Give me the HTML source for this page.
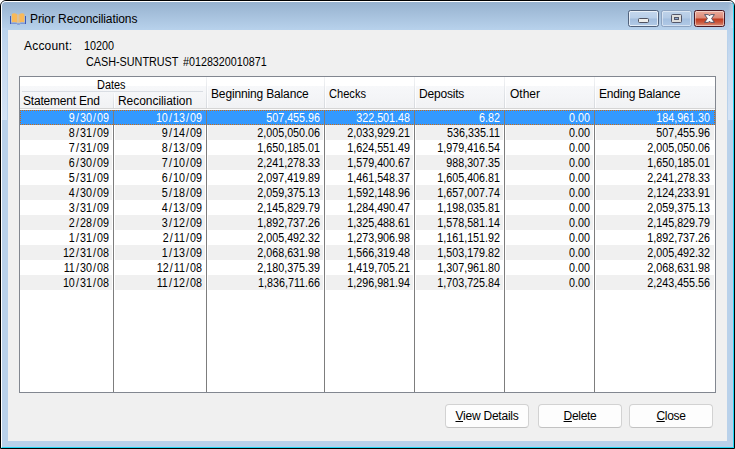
<!DOCTYPE html><html><head><meta charset="utf-8"><title>Prior Reconciliations</title><style>
html,body{margin:0;padding:0;}
body{width:735px;height:449px;overflow:hidden;background:#fff;font-family:"Liberation Sans",sans-serif;font-size:12px;color:#000;position:relative;}
.abs{position:absolute;}
#win{position:absolute;left:0;top:0;width:733px;height:447px;border:1px solid #000;border-radius:6px 6px 0 0;background:#b9d1ea;overflow:hidden;}
#glass{position:absolute;left:0;top:0;width:733px;height:40px;background:linear-gradient(#98b3d0 0,#98b3d0 2px,#b9d3ed 30px);}
#hl{position:absolute;left:0;top:0;width:731px;height:445px;border-left:1px solid #fff;border-top:1px solid #fff;border-right:1px solid #22d6f4;border-bottom:1px solid #22d6f4;border-radius:5px 5px 0 0;}
.stripe{position:absolute;top:27px;width:5px;height:92px;background:linear-gradient(#b9d2ec 0,#c6d9ef 30px,#d4e3f5 100%);}
#client{position:absolute;left:8px;top:30px;width:719px;height:411px;background:#f0f0f0;}
.t{position:absolute;white-space:nowrap;line-height:14px;height:14px;}
#title{left:30px;top:12px;letter-spacing:-0.1px;}
#tbl{position:absolute;left:19px;top:76px;width:695px;height:315px;border:1px solid #828790;background:#fff;}
.hd{position:absolute;white-space:nowrap;line-height:14px;}
.row{position:absolute;left:20px;width:695px;height:15px;}
.g{position:absolute;top:0;height:15px;background:#f0f0f0;}
.c{position:absolute;top:1px;height:15px;line-height:15px;text-align:right;white-space:nowrap;transform:scaleX(0.895);transform-origin:100% 50%;}
.c i{font-style:normal;margin:0 1.2px;}
.vl{position:absolute;top:110px;width:1px;height:282px;background:#7d7d7d;}
.hs{position:absolute;width:1px;background:linear-gradient(#f2f3f5,#dfe2e6 60%,#d8dbe0);}
.btn{position:absolute;top:404px;width:82px;height:22px;border:1px solid #d2d2d2;border-bottom-color:#c2c2c2;border-radius:4px;background:#fdfdfd;text-align:center;line-height:22px;white-space:nowrap;}
.btn u{text-decoration:underline;}
</style></head><body>
<div id="win"><div id="glass"></div><div class="stripe" style="left:1px"></div><div class="stripe" style="left:727px"></div><div class="abs" style="left:727px;top:3px;width:5px;height:24px;background:linear-gradient(90deg,rgba(255,255,255,0),rgba(255,255,255,.28))"></div><div id="hl"></div></div>
<svg class="abs" style="left:9px;top:12px" width="19" height="14" viewBox="0 0 19 14"><path d="M1.5 4V12M16.5 4V12" fill="none" stroke="#3d59bb" stroke-width="1"/><path d="M2 11.2H7.5L8.5 12H10.5L11.5 11.2H16" fill="none" stroke="#5d77c8" stroke-width="0.9"/><path d="M2.8 1.9Q5.4 0.5 8.1 2.2V10.4Q5.4 9.7 2.8 10.3Z" fill="#f8b95a"/><path d="M10.2 2.2Q12.9 0.5 15.4 1.9V10.3Q12.9 9.7 10.2 10.4Z" fill="#f8b95a"/><path d="M8.1 2.2L9.15 2.8L10.2 2.2V10.4L9.15 11L8.1 10.4Z" fill="#dfc096"/></svg>
<div class="t" id="title">Prior Reconciliations</div>
<div class="abs" style="left:628px;top:10px;width:29px;height:15px;border:1px solid #50617b;border-radius:2.5px;background:linear-gradient(#c4d7ee 0,#b9cfe9 48%,#a2bddd 52%,#b3cbe7 100%);box-shadow:inset 0 0 0 1px rgba(255,255,255,.65);"></div>
<div class="abs" style="left:638px;top:18px;width:9px;height:3px;border:1px solid #4f5260;border-radius:1.5px;background:#eeeeec;"></div>
<div class="abs" style="left:661px;top:10px;width:29px;height:15px;border:1px solid #8da3c0;border-radius:2.5px;background:linear-gradient(#bfd3ea 0,#b3cae5 48%,#a4bfdf 52%,#b0c9e6 100%);box-shadow:inset 0 0 0 1px rgba(255,255,255,.45);"></div>
<div class="abs" style="left:671px;top:14px;width:9px;height:7px;border:1px solid #53576a;border-radius:1.5px;background:#dededc;"></div>
<div class="abs" style="left:674px;top:17px;width:3px;height:1px;border:1px solid #53576a;background:#8aa6cc;"></div>
<div class="abs" style="left:694px;top:10px;width:29px;height:15px;border:1px solid #4a1822;border-radius:2.5px;background:linear-gradient(#eaab9b 0,#dc8976 47%,#c03a1e 53%,#c9563c 75%,#db917c 100%);box-shadow:inset 0 0 0 1px rgba(255,255,255,.45);"></div>
<svg class="abs" style="left:704px;top:14px" width="11" height="9" viewBox="0 0 11 9"><path d="M0.6 0.6H4.4L5.5 1.9L6.6 0.6H10.4L7.6 4.5L10.4 8.4H6.6L5.5 7.1L4.4 8.4H0.6L3.4 4.5Z" fill="#fdfdfd" stroke="#474c60" stroke-width="0.9" stroke-linejoin="round"/></svg>
<div id="client"></div>
<div class="t" style="left:24px;top:39px;letter-spacing:0.2px">Account:</div>
<div class="t" style="left:84px;top:39px;transform:scaleX(0.9);transform-origin:0 50%">10200</div>
<div class="t" style="left:86px;top:55px;"><span style="display:inline-block;transform:scaleX(0.9);transform-origin:0 50%;white-space:pre;margin-right:-10.6px">CASH-SUNTRUST </span><span style="display:inline-block;transform:scaleX(0.895);transform-origin:0 50%;margin-left:1.3px">#0128320010871</span></div>
<div id="tbl"></div>
<div class="abs" style="left:20px;top:77px;width:695px;height:9px;background:#fff"></div>
<div class="abs" style="left:20px;top:86px;width:695px;height:22px;background:linear-gradient(#f7f8fa,#f1f2f4)"></div>
<div class="abs" style="left:20px;top:108px;width:695px;height:1px;background:#d5d5d5"></div>
<div class="abs" style="left:20px;top:109px;width:695px;height:1px;background:#fbfbfb"></div>
<div class="abs" style="left:22px;top:91px;width:181px;height:1px;background:#d9dde3"></div>
<div class="hs" style="left:113px;top:93px;height:15px"></div>
<div class="abs" style="left:114px;top:93px;width:1px;height:15px;background:#fdfdfe"></div>
<div class="hs" style="left:206px;top:77px;height:31px"></div>
<div class="abs" style="left:207px;top:86px;width:1px;height:22px;background:#fdfdfe"></div>
<div class="hs" style="left:324px;top:77px;height:31px"></div>
<div class="abs" style="left:325px;top:86px;width:1px;height:22px;background:#fdfdfe"></div>
<div class="hs" style="left:414px;top:77px;height:31px"></div>
<div class="abs" style="left:415px;top:86px;width:1px;height:22px;background:#fdfdfe"></div>
<div class="hs" style="left:504px;top:77px;height:31px"></div>
<div class="abs" style="left:505px;top:86px;width:1px;height:22px;background:#fdfdfe"></div>
<div class="hs" style="left:594px;top:77px;height:31px"></div>
<div class="abs" style="left:595px;top:86px;width:1px;height:22px;background:#fdfdfe"></div>
<div class="hd" style="left:97px;top:78px;transform:scaleX(0.91);transform-origin:0 50%">Dates</div>
<div class="hd" style="left:23px;top:94px;letter-spacing:-0.2px">Statement End</div>
<div class="hd" style="left:118px;top:94px;letter-spacing:-0.05px">Reconciliation</div>
<div class="hd" style="left:211px;top:87px;letter-spacing:-0.15px">Beginning Balance</div>
<div class="hd" style="left:329px;top:87px;transform:scaleX(0.925);transform-origin:0 50%">Checks</div>
<div class="hd" style="left:419px;top:87px;letter-spacing:-0.2px">Deposits</div>
<div class="hd" style="left:510px;top:87px;letter-spacing:0px">Other</div>
<div class="hd" style="left:599px;top:87px;letter-spacing:-0.2px">Ending Balance</div>
<div class="row" style="top:110px;background:#3399ff;color:#fff;">
<div class="c" style="left:0px;width:89px">9<i>/</i>30<i>/</i>09</div>
<div class="c" style="left:94px;width:88px">10<i>/</i>13<i>/</i>09</div>
<div class="c" style="left:187px;width:113px">507,455.96</div>
<div class="c" style="left:305px;width:85px">322,501.48</div>
<div class="c" style="left:395px;width:85px">6.82</div>
<div class="c" style="left:485px;width:85px">0.00</div>
<div class="c" style="left:575px;width:115px">184,961.30</div>
</div>
<div class="row" style="top:125px;">
<div class="g" style="left:0px;width:92px"></div>
<div class="g" style="left:95px;width:90px"></div>
<div class="g" style="left:188px;width:115px"></div>
<div class="g" style="left:306px;width:87px"></div>
<div class="g" style="left:396px;width:87px"></div>
<div class="g" style="left:486px;width:87px"></div>
<div class="g" style="left:576px;width:118px"></div>
<div class="c" style="left:0px;width:89px">8<i>/</i>31<i>/</i>09</div>
<div class="c" style="left:94px;width:88px">9<i>/</i>14<i>/</i>09</div>
<div class="c" style="left:187px;width:113px">2,005,050.06</div>
<div class="c" style="left:305px;width:85px">2,033,929.21</div>
<div class="c" style="left:395px;width:85px">536,335.11</div>
<div class="c" style="left:485px;width:85px">0.00</div>
<div class="c" style="left:575px;width:115px">507,455.96</div>
</div>
<div class="row" style="top:140px;">
<div class="c" style="left:0px;width:89px">7<i>/</i>31<i>/</i>09</div>
<div class="c" style="left:94px;width:88px">8<i>/</i>13<i>/</i>09</div>
<div class="c" style="left:187px;width:113px">1,650,185.01</div>
<div class="c" style="left:305px;width:85px">1,624,551.49</div>
<div class="c" style="left:395px;width:85px">1,979,416.54</div>
<div class="c" style="left:485px;width:85px">0.00</div>
<div class="c" style="left:575px;width:115px">2,005,050.06</div>
</div>
<div class="row" style="top:155px;">
<div class="g" style="left:0px;width:92px"></div>
<div class="g" style="left:95px;width:90px"></div>
<div class="g" style="left:188px;width:115px"></div>
<div class="g" style="left:306px;width:87px"></div>
<div class="g" style="left:396px;width:87px"></div>
<div class="g" style="left:486px;width:87px"></div>
<div class="g" style="left:576px;width:118px"></div>
<div class="c" style="left:0px;width:89px">6<i>/</i>30<i>/</i>09</div>
<div class="c" style="left:94px;width:88px">7<i>/</i>10<i>/</i>09</div>
<div class="c" style="left:187px;width:113px">2,241,278.33</div>
<div class="c" style="left:305px;width:85px">1,579,400.67</div>
<div class="c" style="left:395px;width:85px">988,307.35</div>
<div class="c" style="left:485px;width:85px">0.00</div>
<div class="c" style="left:575px;width:115px">1,650,185.01</div>
</div>
<div class="row" style="top:170px;">
<div class="c" style="left:0px;width:89px">5<i>/</i>31<i>/</i>09</div>
<div class="c" style="left:94px;width:88px">6<i>/</i>10<i>/</i>09</div>
<div class="c" style="left:187px;width:113px">2,097,419.89</div>
<div class="c" style="left:305px;width:85px">1,461,548.37</div>
<div class="c" style="left:395px;width:85px">1,605,406.81</div>
<div class="c" style="left:485px;width:85px">0.00</div>
<div class="c" style="left:575px;width:115px">2,241,278.33</div>
</div>
<div class="row" style="top:185px;">
<div class="g" style="left:0px;width:92px"></div>
<div class="g" style="left:95px;width:90px"></div>
<div class="g" style="left:188px;width:115px"></div>
<div class="g" style="left:306px;width:87px"></div>
<div class="g" style="left:396px;width:87px"></div>
<div class="g" style="left:486px;width:87px"></div>
<div class="g" style="left:576px;width:118px"></div>
<div class="c" style="left:0px;width:89px">4<i>/</i>30<i>/</i>09</div>
<div class="c" style="left:94px;width:88px">5<i>/</i>18<i>/</i>09</div>
<div class="c" style="left:187px;width:113px">2,059,375.13</div>
<div class="c" style="left:305px;width:85px">1,592,148.96</div>
<div class="c" style="left:395px;width:85px">1,657,007.74</div>
<div class="c" style="left:485px;width:85px">0.00</div>
<div class="c" style="left:575px;width:115px">2,124,233.91</div>
</div>
<div class="row" style="top:200px;">
<div class="c" style="left:0px;width:89px">3<i>/</i>31<i>/</i>09</div>
<div class="c" style="left:94px;width:88px">4<i>/</i>13<i>/</i>09</div>
<div class="c" style="left:187px;width:113px">2,145,829.79</div>
<div class="c" style="left:305px;width:85px">1,284,490.47</div>
<div class="c" style="left:395px;width:85px">1,198,035.81</div>
<div class="c" style="left:485px;width:85px">0.00</div>
<div class="c" style="left:575px;width:115px">2,059,375.13</div>
</div>
<div class="row" style="top:215px;">
<div class="g" style="left:0px;width:92px"></div>
<div class="g" style="left:95px;width:90px"></div>
<div class="g" style="left:188px;width:115px"></div>
<div class="g" style="left:306px;width:87px"></div>
<div class="g" style="left:396px;width:87px"></div>
<div class="g" style="left:486px;width:87px"></div>
<div class="g" style="left:576px;width:118px"></div>
<div class="c" style="left:0px;width:89px">2<i>/</i>28<i>/</i>09</div>
<div class="c" style="left:94px;width:88px">3<i>/</i>12<i>/</i>09</div>
<div class="c" style="left:187px;width:113px">1,892,737.26</div>
<div class="c" style="left:305px;width:85px">1,325,488.61</div>
<div class="c" style="left:395px;width:85px">1,578,581.14</div>
<div class="c" style="left:485px;width:85px">0.00</div>
<div class="c" style="left:575px;width:115px">2,145,829.79</div>
</div>
<div class="row" style="top:230px;">
<div class="c" style="left:0px;width:89px">1<i>/</i>31<i>/</i>09</div>
<div class="c" style="left:94px;width:88px">2<i>/</i>11<i>/</i>09</div>
<div class="c" style="left:187px;width:113px">2,005,492.32</div>
<div class="c" style="left:305px;width:85px">1,273,906.98</div>
<div class="c" style="left:395px;width:85px">1,161,151.92</div>
<div class="c" style="left:485px;width:85px">0.00</div>
<div class="c" style="left:575px;width:115px">1,892,737.26</div>
</div>
<div class="row" style="top:245px;">
<div class="g" style="left:0px;width:92px"></div>
<div class="g" style="left:95px;width:90px"></div>
<div class="g" style="left:188px;width:115px"></div>
<div class="g" style="left:306px;width:87px"></div>
<div class="g" style="left:396px;width:87px"></div>
<div class="g" style="left:486px;width:87px"></div>
<div class="g" style="left:576px;width:118px"></div>
<div class="c" style="left:0px;width:89px">12<i>/</i>31<i>/</i>08</div>
<div class="c" style="left:94px;width:88px">1<i>/</i>13<i>/</i>09</div>
<div class="c" style="left:187px;width:113px">2,068,631.98</div>
<div class="c" style="left:305px;width:85px">1,566,319.48</div>
<div class="c" style="left:395px;width:85px">1,503,179.82</div>
<div class="c" style="left:485px;width:85px">0.00</div>
<div class="c" style="left:575px;width:115px">2,005,492.32</div>
</div>
<div class="row" style="top:260px;">
<div class="c" style="left:0px;width:89px">11<i>/</i>30<i>/</i>08</div>
<div class="c" style="left:94px;width:88px">12<i>/</i>11<i>/</i>08</div>
<div class="c" style="left:187px;width:113px">2,180,375.39</div>
<div class="c" style="left:305px;width:85px">1,419,705.21</div>
<div class="c" style="left:395px;width:85px">1,307,961.80</div>
<div class="c" style="left:485px;width:85px">0.00</div>
<div class="c" style="left:575px;width:115px">2,068,631.98</div>
</div>
<div class="row" style="top:275px;">
<div class="g" style="left:0px;width:92px"></div>
<div class="g" style="left:95px;width:90px"></div>
<div class="g" style="left:188px;width:115px"></div>
<div class="g" style="left:306px;width:87px"></div>
<div class="g" style="left:396px;width:87px"></div>
<div class="g" style="left:486px;width:87px"></div>
<div class="g" style="left:576px;width:118px"></div>
<div class="c" style="left:0px;width:89px">10<i>/</i>31<i>/</i>08</div>
<div class="c" style="left:94px;width:88px">11<i>/</i>12<i>/</i>08</div>
<div class="c" style="left:187px;width:113px">1,836,711.66</div>
<div class="c" style="left:305px;width:85px">1,296,981.94</div>
<div class="c" style="left:395px;width:85px">1,703,725.84</div>
<div class="c" style="left:485px;width:85px">0.00</div>
<div class="c" style="left:575px;width:115px">2,243,455.56</div>
</div>
<div class="vl" style="left:113px"></div>
<div class="vl" style="left:206px"></div>
<div class="vl" style="left:324px"></div>
<div class="vl" style="left:414px"></div>
<div class="vl" style="left:504px"></div>
<div class="vl" style="left:594px"></div>
<div class="abs" style="left:20px;top:110px;width:693px;height:13px;border:1px dotted #d06a10;"></div>
<div class="btn" style="left:445px;letter-spacing:-0.23px"><u>V</u>iew Details</div>
<div class="btn" style="left:538px;letter-spacing:-0.3px"><u>D</u>elete</div>
<div class="btn" style="left:629px;letter-spacing:-0.3px"><u>C</u>lose</div>
</body></html>
